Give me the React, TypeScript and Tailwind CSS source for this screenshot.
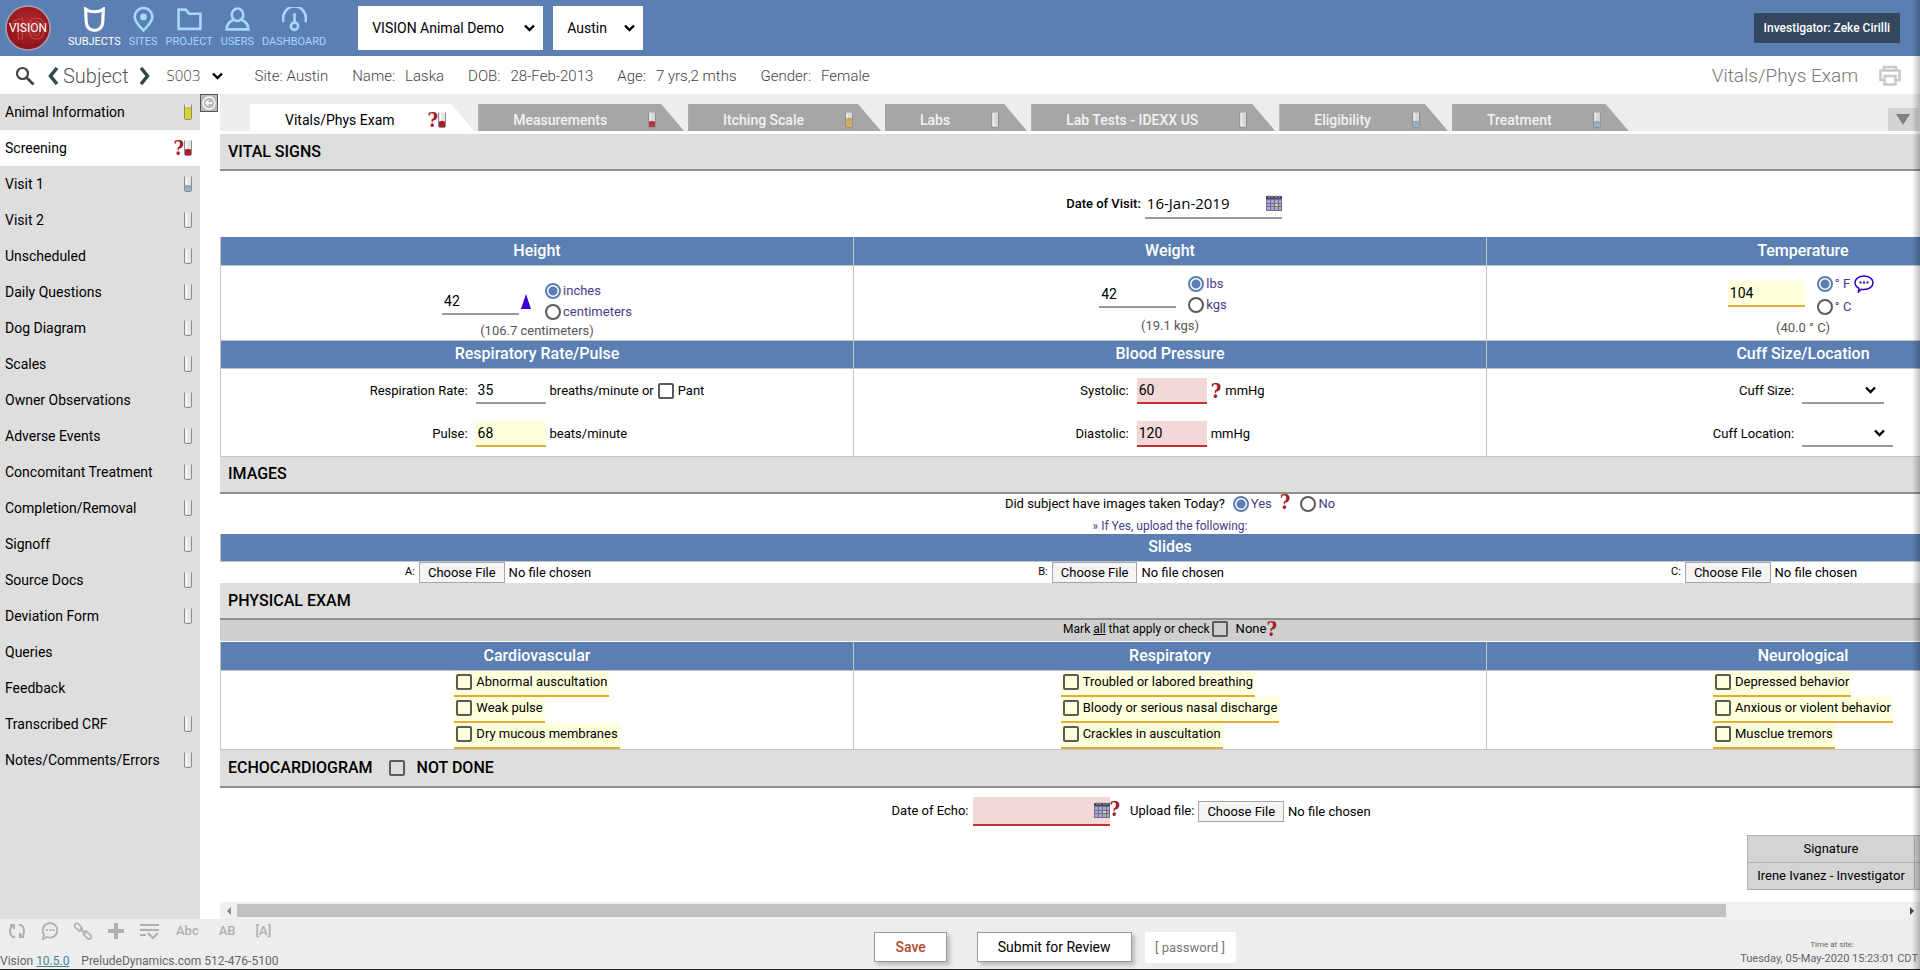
import type { ReactNode } from "react";
import { useState } from "react";

type Fill = "none" | "yellow" | "red" | "blue" | "amber";

const fillColors: Record<Fill, { color: string; height: number }> = {
  none: { color: "#e9e9e9", height: 0 },
  yellow: { color: "#dcd32b", height: 11 },
  red: { color: "#b3202c", height: 5 },
  blue: { color: "#8fb4d6", height: 5 },
  amber: { color: "#dfb04a", height: 8 },
};

const sidebarItems: { label: string; fill?: Fill; query?: boolean }[] = [
  { label: "Animal Information", fill: "yellow" },
  { label: "Screening", fill: "red", query: true },
  { label: "Visit 1", fill: "blue" },
  { label: "Visit 2", fill: "none" },
  { label: "Unscheduled", fill: "none" },
  { label: "Daily Questions", fill: "none" },
  { label: "Dog Diagram", fill: "none" },
  { label: "Scales", fill: "none" },
  { label: "Owner Observations", fill: "none" },
  { label: "Adverse Events", fill: "none" },
  { label: "Concomitant Treatment", fill: "none" },
  { label: "Completion/Removal", fill: "none" },
  { label: "Signoff", fill: "none" },
  { label: "Source Docs", fill: "none" },
  { label: "Deviation Form", fill: "none" },
  { label: "Queries" },
  { label: "Feedback" },
  { label: "Transcribed CRF", fill: "none" },
  { label: "Notes/Comments/Errors", fill: "none" },
];

const tabs: { label: string; fill: Fill; query?: boolean }[] = [
  { label: "Vitals/Phys Exam", fill: "red", query: true },
  { label: "Measurements", fill: "red" },
  { label: "Itching Scale", fill: "amber" },
  { label: "Labs", fill: "none" },
  { label: "Lab Tests - IDEXX US", fill: "none" },
  { label: "Eligibility", fill: "blue" },
  { label: "Treatment", fill: "blue" },
];

const subjectFacts = [
  ["Site:", "Austin"],
  ["Name:", "Laska"],
  ["DOB:", "28-Feb-2013"],
  ["Age:", "7 yrs,2 mths"],
  ["Gender:", "Female"],
];

const findings = [
  {
    title: "Cardiovascular",
    items: ["Abnormal auscultation", "Weak pulse", "Dry mucous membranes"],
  },
  {
    title: "Respiratory",
    items: [
      "Troubled or labored breathing",
      "Bloody or serious nasal discharge",
      "Crackles in auscultation",
    ],
  },
  {
    title: "Neurological",
    items: ["Depressed behavior", "Anxious or violent behavior", "Musclue tremors"],
  },
];

function Tube({ fill }: { fill: Fill }) {
  const { color, height } = fillColors[fill];
  return (
    <svg width="8" height="16" viewBox="0 0 8 16" className="shrink-0" aria-hidden="true">
      <path d="M.5 .5v13.5q0 1.5 1.5 1.5h4q1.5 0 1.5-1.5v-13.5" fill="#e4e4e4" stroke="#8c8c8c" />
      <path d="M2.5 1.5v13" stroke="#fff" strokeWidth="1.5" />
      {height > 0 ? (
        <>
          <rect x="1" y={15 - height} width="6" height={height} fill={color} />
          <ellipse cx="4" cy={15 - height} rx="3" ry="1" fill={color} stroke="#0003" strokeWidth=".5" />
        </>
      ) : null}
    </svg>
  );
}

function Query() {
  return (
    <span className="inline-block shrink-0 font-['DejaVu_Serif_Condensed','DejaVu_Serif',serif] text-[20px] leading-4 font-bold text-[#a51c28]">
      ?
    </span>
  );
}

function Chevron({ className }: { className?: string }) {
  return (
    <svg
      width="11"
      height="8"
      viewBox="0 0 11 8"
      fill="none"
      stroke="#000"
      strokeWidth="2.4"
      className={className}
      aria-hidden="true"
    >
      <path d="M1 1.5l4.5 4.5L10 1.5" />
    </svg>
  );
}

function Calendar() {
  return (
    <svg width="16" height="16" viewBox="0 0 16 16" className="shrink-0" aria-hidden="true">
      <rect x="0" y="1" width="16" height="15" fill="#6d6d9a" />
      <rect x="0" y="1" width="16" height="3" fill="#4a4a5e" />
      <path d="M3 0v3M6 0v3M10 0v3M13 0v3" stroke="#aaa" />
      <path
        d="M1 5h3v3H1zM5 5h3v3H5zM9 5h3v3H9zM13 5h2v3h-2zM1 9h3v2H1zM5 9h3v2H5zM13 9h2v2h-2zM1 12h3v3H1zM5 12h3v3H5zM9 12h3v3H9zM13 12h2v3h-2z"
        fill="#a9a9cc"
      />
      <rect x="9" y="9" width="3" height="2" fill="#f1dc3c" />
    </svg>
  );
}

function Radio({
  name,
  label,
  defaultChecked,
}: {
  name: string;
  label: string;
  defaultChecked?: boolean;
}) {
  return (
    <label className="flex h-[21px] items-center gap-0.5 text-[#473c86]">
      <input
        type="radio"
        name={name}
        defaultChecked={defaultChecked}
        className="size-4 appearance-none rounded-full border-2 border-[#5a5a5a] bg-white checked:border-[#5b7fb2] checked:bg-[radial-gradient(circle,#5b7fb2_4px,#fff_5px)]"
      />
      {label}
    </label>
  );
}

const checkboxClass =
  "size-4 shrink-0 appearance-none rounded-xs border-2 border-[#5a5a5a] checked:bg-[#5b7fb2]";

const inputTones = {
  plain: "border-[#999]",
  warn: "border-[#dfae3a] bg-[#feffdb]",
  error: "border-[#c62f2f] bg-[#f3d8d8]",
};

function ValueInput({
  label,
  id,
  value,
  tone = "plain",
  wide,
}: {
  label?: string;
  id: string;
  value: string;
  tone?: keyof typeof inputTones;
  wide?: boolean;
}) {
  return (
    <input
      id={id}
      aria-label={label}
      defaultValue={value}
      className={`h-[26px] border-b-2 px-0.5 text-sm text-black outline-none ${wide ? "w-[77px]" : "w-[70px]"} ${inputTones[tone]}`}
    />
  );
}

function LineSelect({ id, className }: { id: string; className: string }) {
  return (
    <span className={`relative block ${className}`}>
      <select id={id} className="h-[26px] w-full appearance-none border-b-2 border-[#999] outline-none">
        <option></option>
      </select>
      <Chevron className="pointer-events-none absolute top-2 right-2" />
    </span>
  );
}

function FileField({ id, label, small }: { id: string; label: string; small?: boolean }) {
  return (
    <div className="flex items-center gap-1">
      <label htmlFor={id} className={small ? "text-[11px]" : ""}>
        {label}
      </label>
      <input
        id={id}
        type="file"
        className="h-[21px] w-[250px] text-[13px] leading-[19px] file:mr-1 file:border file:border-[#a6a6a6] file:bg-[#f4f4f4] file:px-2 file:text-[13px] file:leading-[19px] file:font-normal"
      />
    </div>
  );
}

function SectionTitle({ children }: { children: ReactNode }) {
  return (
    <div className="flex h-[37px] items-center border-b-2 border-[#909090] bg-[#dedede] px-2">
      <h2 className="text-base font-medium">{children}</h2>
    </div>
  );
}

const thClass = "h-7 border border-t-0 border-[#c4c4c4] bg-[#5b7fb2] text-base font-medium text-white";
const tdClass = "border border-[#c4c4c4] p-0 align-top";

function Header() {
  const nav: { label: string; icon: ReactNode }[] = [
    {
      label: "SUBJECTS",
      icon: <path d="M3.500 2q3 2.500 8.500 2.500t8.500-2.500l-.5 12q-.5 8-8 8.500-7.500-.5-8-8.500z" strokeWidth="3" />,
    },
    {
      label: "SITES",
      icon: (
        <>
          <path d="M12 22.500q-8.500-8.500-8.500-13a8.500 8.500 0 0 1 17 0q0 4.500-8.500 13z" />
          <circle cx="12" cy="9.500" r="2" fill="currentColor" />
        </>
      ),
    },
    { label: "PROJECT", icon: <path d="M1.500 21V2.500h7l3 4h11V21z" /> },
    {
      label: "USERS",
      icon: (
        <>
          <ellipse cx="12" cy="7.500" rx="5.500" ry="6" />
          <path d="M8 12.500q-6 2-6.500 9h21q-.5-7-6.500-9" />
        </>
      ),
    },
    {
      label: "DASHBOARD",
      icon: (
        <>
          <path d="M1.500 14.500a11 11.500 0 1 1 21 0" />
          <path d="M12 6v9" />
          <circle cx="12" cy="18.500" r="3.500" />
        </>
      ),
    },
  ];

  return (
    <header className="flex h-14 shrink-0 items-center bg-[#5b7fb2] pr-5 pl-[5px]">
      <svg width="46" height="46" viewBox="0 0 46 46" role="img" aria-label="Vision 10">
        <defs>
          <radialGradient id="logo" cx=".5" cy=".4" r=".6">
            <stop offset="0" stopColor="#b52a2c" />
            <stop offset="1" stopColor="#8c1219" />
          </radialGradient>
        </defs>
        <circle cx="23" cy="23" r="22" fill="url(#logo)" stroke="#a9a0b4" strokeWidth="1.500" />
        <text x="23" y="34" textAnchor="middle" fontFamily="Roboto" fontWeight="700" fontSize="30" fill="none" stroke="#c9605f" strokeWidth=".7">
          10
        </text>
        <text x="23" y="27" textAnchor="middle" fontFamily="Roboto" fontSize="12" fill="#fff">
          VISION
        </text>
      </svg>
      <nav className="ml-[17px] flex gap-2">
        {nav.map((item, index) => (
          <a
            key={item.label}
            href="#"
            className={`flex flex-col items-center text-[11px] leading-4 ${index === 0 ? "text-white" : "text-[#a5d8fb]"}`}
          >
            <svg width="25" height="25" viewBox="0 0 24 24" fill="none" stroke="currentColor" strokeWidth="2.500" aria-hidden="true">
              {item.icon}
            </svg>
            <span className="mt-0.5">{item.label}</span>
          </a>
        ))}
      </nav>
      <div className="ml-8 flex gap-2.5 text-sm">
        <div className="relative">
          <select aria-label="Study" className="h-11 w-[185px] appearance-none bg-white pl-3.5">
            <option>VISION Animal Demo</option>
          </select>
          <Chevron className="pointer-events-none absolute top-[18px] right-2" />
        </div>
        <div className="relative">
          <select aria-label="Site" className="h-11 w-[90px] appearance-none bg-white pl-3.5">
            <option>Austin</option>
          </select>
          <Chevron className="pointer-events-none absolute top-[18px] right-2" />
        </div>
      </div>
      <button type="button" className="ml-auto h-[30px] bg-[#33475f] px-2.5 text-xs font-medium text-white">
        Investigator: Zeke Cirilli
      </button>
    </header>
  );
}

function SubjectBar() {
  return (
    <div className="flex h-[38px] shrink-0 items-center bg-white pt-0.5 pr-[18px] pl-[15px] text-[15px] font-light text-[#444]">
      <button type="button" aria-label="Search">
        <svg width="20" height="20" viewBox="0 0 20 20" fill="none" stroke="#444" aria-hidden="true">
          <circle cx="7.500" cy="7.500" r="5.500" strokeWidth="2.200" />
          <path d="M12 12l6.500 6.500" strokeWidth="2.800" />
        </svg>
      </button>
      <button type="button" aria-label="Previous subject" className="ml-3">
        <svg width="12" height="18" viewBox="0 0 12 18" fill="none" stroke="#2f4a4d" strokeWidth="3.500" aria-hidden="true">
          <path d="M10 1L3.500 9l6.500 8" />
        </svg>
      </button>
      <span className="mx-1 text-xl text-[#555]">Subject</span>
      <button type="button" aria-label="Next subject" className="ml-1.5">
        <svg width="12" height="18" viewBox="0 0 12 18" fill="none" stroke="#2f4a4d" strokeWidth="3.500" aria-hidden="true">
          <path d="M2 1l6.500 8L2 17" />
        </svg>
      </button>
      <div className="relative ml-4">
        <select aria-label="Subject number" className="w-[60px] appearance-none font-['Open_Sans',sans-serif] text-[15px]">
          <option>S003</option>
        </select>
        <Chevron className="pointer-events-none absolute top-2 right-1" />
      </div>
      <dl className="ml-7 flex gap-6">
        {subjectFacts.map(([term, value], index) => (
          <div key={term} className={`flex ${index === 0 ? "gap-1" : "gap-2.5"}`}>
            <dt>{term}</dt>
            <dd>{value}</dd>
          </div>
        ))}
      </dl>
      <h1 className="ml-auto text-[19px] text-[#777]">Vitals/Phys Exam</h1>
      <button type="button" aria-label="Print" className="ml-5">
        <svg width="24" height="22" viewBox="0 0 24 22" fill="none" stroke="#c9c9c9" strokeWidth="2.500" aria-hidden="true">
          <path d="M6 5V2h12v3M6 15H2.500V5.500h19V15H18M6.500 11h11v8.500h-11z" />
        </svg>
      </button>
    </div>
  );
}

function Sidebar() {
  return (
    <nav className="w-[200px] shrink-0 bg-[#dedede]">
      {sidebarItems.map((item) => (
        <a
          key={item.label}
          href="#"
          className={`flex h-9 items-center pr-2 pl-[5px] text-sm ${item.query ? "bg-white" : ""}`}
        >
          <span className="grow">{item.label}</span>
          {item.query ? <Query /> : null}
          {item.fill ? <Tube fill={item.fill} /> : null}
        </a>
      ))}
    </nav>
  );
}

function TabBar() {
  return (
    <div className="flex h-[37px] shrink-0 items-end bg-[#ededed] pr-0.5 pl-[30px]">
      <div role="tablist" className="flex gap-1">
        {tabs.map((tab, index) => (
          <button
            key={tab.label}
            type="button"
            role="tab"
            aria-selected={index === 0}
            className={`flex h-[27px] items-center pr-7 pl-[35px] text-sm [clip-path:polygon(0_0,calc(100%-23px)_0,100%_100%,0_100%)] ${
              index === 0 ? "bg-white text-black" : "bg-[#a6a6a6] font-medium text-[#f2f2f2]"
            }`}
          >
            <span className={`pt-1 ${index === 0 ? "mr-[33px]" : "mr-[41px]"}`}>{tab.label}</span>
            <span className={`flex items-center pt-1 ${index === 0 ? "" : "opacity-80"}`}>
              {tab.query ? <Query /> : null}
              <Tube fill={tab.fill} />
            </span>
          </button>
        ))}
      </div>
      <button type="button" aria-label="More tabs" className="ml-auto flex h-[23px] w-[30px] items-center justify-center bg-[#d3d3d3]">
        <svg width="14" height="11" viewBox="0 0 14 11" aria-hidden="true">
          <path d="M0 0h14L7 11z" fill="#808080" />
        </svg>
      </button>
    </div>
  );
}

const pairGridClass =
  "grid grid-cols-[auto_auto] items-center justify-center gap-x-2 gap-y-[17px] pt-[9px] text-[13px]";

function VitalsTable() {
  return (
    <table className="w-full table-fixed border-collapse">
      <tbody>
        <tr>
          <th className={thClass}>Height</th>
          <th className={thClass}>Weight</th>
          <th className={thClass}>Temperature</th>
        </tr>
        <tr className="h-[75px]">
          <td className={tdClass}>
            <div className="flex flex-col items-center pt-[15px] text-[13px] leading-4">
              <div className="flex items-center">
                <ValueInput id="height" label="Height" value="42" wide />
                <svg width="10" height="15" viewBox="0 0 10 15" className="mr-3.5 ml-0.5" aria-hidden="true">
                  <path d="M5 0l5 15H0z" fill="#3a00d8" />
                </svg>
                <div>
                  <Radio name="heightUnit" label="inches" defaultChecked />
                  <Radio name="heightUnit" label="centimeters" />
                </div>
              </div>
              <span className="text-[#555]">(106.7 centimeters)</span>
            </div>
          </td>
          <td className={tdClass}>
            <div className="flex flex-col items-center pt-2 text-[13px] leading-5">
              <div className="flex items-center gap-3 pr-3.5">
                <ValueInput id="weight" label="Weight" value="42" wide />
                <div>
                  <Radio name="weightUnit" label="lbs" defaultChecked />
                  <Radio name="weightUnit" label="kgs" />
                </div>
              </div>
              <span className="text-[#555]">(19.1 kgs)</span>
            </div>
          </td>
          <td className={tdClass}>
            <div className="flex flex-col items-center pt-[5px] text-[13px] leading-5">
              <div className="flex items-center gap-3 pr-1">
                <ValueInput id="temperature" label="Temperature" value="104" tone="warn" wide />
                <div>
                  <div className="flex h-[26px] items-center gap-1">
                    <Radio name="tempUnit" label="° F" defaultChecked />
                    <button type="button" aria-label="Comment">
                      <svg width="20" height="18" viewBox="0 0 20 18" aria-hidden="true">
                        <path
                          d="M10 1c5 0 9 2.900 9 6.800s-4 6.800-9 6.800q-1.500 0-2.800-.3L4.500 17l.5-3.700C2.500 12 1 10.200 1 7.800 1 3.900 5 1 10 1z"
                          fill="none"
                          stroke="#3500c8"
                          strokeWidth="1.500"
                        />
                        <path d="M5.500 7.500h2M9 7.500h2M12.500 7.500h2" stroke="#3500c8" strokeWidth="2" />
                      </svg>
                    </button>
                  </div>
                  <Radio name="tempUnit" label="° C" />
                </div>
              </div>
              <span className="text-[#555]">(40.0 ° C)</span>
            </div>
          </td>
        </tr>
        <tr>
          <th className={thClass}>Respiratory Rate/Pulse</th>
          <th className={thClass}>Blood Pressure</th>
          <th className={thClass}>Cuff Size/Location</th>
        </tr>
        <tr className="h-[88px]">
          <td className={tdClass}>
            <div className={pairGridClass}>
              <label htmlFor="respiration" className="text-right">
                Respiration Rate:
              </label>
              <div className="flex items-center gap-1">
                <ValueInput id="respiration" value="35" />
                breaths/minute or
                <label className="flex items-center gap-1">
                  <input type="checkbox" className={checkboxClass} />
                  Pant
                </label>
              </div>
              <label htmlFor="pulse" className="text-right">
                Pulse:
              </label>
              <div className="flex items-center gap-1">
                <ValueInput id="pulse" value="68" tone="warn" />
                beats/minute
              </div>
            </div>
          </td>
          <td className={tdClass}>
            <div className={pairGridClass}>
              <label htmlFor="systolic" className="text-right">
                Systolic:
              </label>
              <div className="flex items-center gap-1">
                <ValueInput id="systolic" value="60" tone="error" />
                <Query />
                mmHg
              </div>
              <label htmlFor="diastolic" className="text-right">
                Diastolic:
              </label>
              <div className="flex items-center gap-1">
                <ValueInput id="diastolic" value="120" tone="error" />
                mmHg
              </div>
            </div>
          </td>
          <td className={tdClass}>
            <div className={pairGridClass}>
              <label htmlFor="cuffSize" className="text-right">
                Cuff Size:
              </label>
              <LineSelect id="cuffSize" className="w-[82px]" />
              <label htmlFor="cuffLocation" className="text-right">
                Cuff Location:
              </label>
              <LineSelect id="cuffLocation" className="w-[91px]" />
            </div>
          </td>
        </tr>
      </tbody>
    </table>
  );
}

function FindingsTable() {
  return (
    <table className="w-full table-fixed border-collapse">
      <thead>
        <tr>
          {findings.map((group) => (
            <th key={group.title} className={thClass}>
              {group.title}
            </th>
          ))}
        </tr>
      </thead>
      <tbody>
        <tr>
          {findings.map((group) => (
            <td key={group.title} className={tdClass}>
              <div className="flex justify-center">
                <div className="flex flex-col items-start">
                  {group.items.map((item) => (
                    <label
                      key={item}
                      className="flex h-[26px] items-center gap-1 border-b-2 border-[#dfae3a] bg-[#feffdb] px-0.5 pb-0.5 text-[13px]"
                    >
                      <input type="checkbox" className={checkboxClass} />
                      {item}
                    </label>
                  ))}
                </div>
              </div>
            </td>
          ))}
        </tr>
      </tbody>
    </table>
  );
}

function ExamForm() {
  return (
    <form className="min-w-[1900px] text-[13px]">
      <SectionTitle>VITAL SIGNS</SectionTitle>
      <div className="flex h-[66px] items-center justify-center gap-1 pl-2">
        <label htmlFor="visitDate" className="font-medium">
          Date of Visit:
        </label>
        <div className="flex h-[30px] w-[137px] items-center border-b-2 border-[#999]">
          <input
            id="visitDate"
            defaultValue="16-Jan-2019"
            className="w-full px-0.5 font-['Open_Sans',sans-serif] text-[15px] outline-none"
          />
          <Calendar />
        </div>
      </div>
      <VitalsTable />

      <SectionTitle>IMAGES</SectionTitle>
      <fieldset className="flex h-10 flex-col items-center justify-between">
        <div className="flex items-center">
          <span className="mr-2">Did subject have images taken Today?</span>
          <Radio name="images" label="Yes" defaultChecked />
          <span className="mr-2.5 ml-2">
            <Query />
          </span>
          <Radio name="images" label="No" />
        </div>
        <div className="text-xs leading-4 text-[#473c86]">» If Yes, upload the following:</div>
      </fieldset>
      <table className="w-full table-fixed border-collapse">
        <thead>
          <tr>
            <th colSpan={3} className={thClass}>
              Slides
            </th>
          </tr>
        </thead>
        <tbody>
          <tr>
            {["A", "B", "C"].map((slot) => (
              <td key={slot} className="p-0">
                <div className="flex justify-center">
                  <FileField id={`slide${slot}`} label={`${slot}:`} small />
                </div>
              </td>
            ))}
          </tr>
        </tbody>
      </table>

      <SectionTitle>PHYSICAL EXAM</SectionTitle>
      <div className="mb-px flex h-[21px] items-center justify-center bg-[#cfcfcf] pb-[3px]">
        <span className="mr-0.5 text-xs">
          Mark <u>all</u> that apply or check
        </span>
        <label className="flex items-center gap-2">
          <input type="checkbox" className={checkboxClass} />
          None
        </label>
        <Query />
      </div>
      <FindingsTable />

      <div className="flex h-[38px] items-center border-b-2 border-[#909090] bg-[#dedede] px-2 text-base font-medium">
        <h2>ECHOCARDIOGRAM</h2>
        <label className="ml-4 flex items-center gap-3">
          <input type="checkbox" className={checkboxClass} />
          NOT DONE
        </label>
      </div>
      <div className="flex items-start justify-center pt-[9px]">
        <div className="flex items-center gap-1">
          <label htmlFor="echoDate">Date of Echo:</label>
          <div className="flex h-[29px] w-[137px] items-center border-b-2 border-[#c62f2f] bg-[#f3d8d8]">
            <input id="echoDate" className="w-full px-0.5 text-[15px] outline-none" />
            <Calendar />
          </div>
        </div>
        <span className="mt-1 mr-2.5">
          <Query />
        </span>
        <div className="mt-1">
          <FileField id="echoFile" label="Upload file:" />
        </div>
      </div>

      <table className="mt-[9px] ml-auto w-[373px] border-collapse bg-[#d4d4d4]">
        <tbody>
          <tr className="h-[27px]">
            <td className="w-[167px] border border-[#b0b0b0] text-center">Signature</td>
            <td className="border border-[#b0b0b0]"></td>
          </tr>
          <tr className="h-[27px]">
            <td className="border border-[#b0b0b0] text-center whitespace-nowrap">Irene Ivanez - Investigator</td>
            <td className="border border-[#b0b0b0]"></td>
          </tr>
        </tbody>
      </table>
    </form>
  );
}

function ScrollBar() {
  return (
    <div className="flex h-[17px] shrink-0 items-center bg-[#f0f0f0]">
      <button type="button" aria-label="Scroll left" className="flex w-[17px] justify-center">
        <svg width="4" height="8" viewBox="0 0 4 8" aria-hidden="true">
          <path d="M4 0v8L0 4z" fill="#888" />
        </svg>
      </button>
      <div className="grow pr-[177px]">
        <div className="h-[13px] bg-[#c1c1c1]" />
      </div>
      <button type="button" aria-label="Scroll right" className="flex w-[17px] justify-center">
        <svg width="4" height="8" viewBox="0 0 4 8" aria-hidden="true">
          <path d="M0 0v8l4-4z" fill="#444" />
        </svg>
      </button>
    </div>
  );
}

function Footer() {
  return (
    <footer className="flex h-[51px] shrink-0 justify-between border-b border-[#222] bg-[#ededed] text-xs text-[#666]">
      <div className="flex flex-1 flex-col justify-between">
        <div className="flex h-6 items-center gap-[15px] pl-2 text-[13px] font-medium text-[#b0b0b0]">
          <button type="button" aria-label="Refresh">
            <svg width="18" height="16" viewBox="0 0 18 16" fill="none" stroke="currentColor" strokeWidth="2" aria-hidden="true">
              <path d="M7 14H5q-3-2-3-6t3-5.500M2 2h4v4M11 2h2q3 2 3 6t-3 5.500M16 14h-4v-4" />
            </svg>
          </button>
          <button type="button" aria-label="Comments">
            <svg width="18" height="18" viewBox="0 0 18 18" fill="none" stroke="currentColor" strokeWidth="1.800" aria-hidden="true">
              <path d="M2 17l1-4.500A7.300 7.300 0 1 1 6 15z" />
              <path d="M5 8h2M8.200 8h2M11.400 8h2" />
            </svg>
          </button>
          <button type="button" aria-label="Link">
            <svg width="18" height="18" viewBox="0 0 18 18" fill="none" stroke="currentColor" strokeWidth="1.600" aria-hidden="true">
              <rect x="0" y="3" width="9" height="4.500" rx="2.200" transform="rotate(45 4.500 5)" />
              <rect x="9" y="11" width="9" height="4.500" rx="2.200" transform="rotate(45 13.500 13)" />
              <path d="M6 6l6 6" />
            </svg>
          </button>
          <button type="button" aria-label="Add">
            <svg width="18" height="18" viewBox="0 0 18 18" stroke="currentColor" strokeWidth="4" aria-hidden="true">
              <path d="M9 1v16M1 9h16" />
            </svg>
          </button>
          <button type="button" aria-label="Collapse list">
            <svg width="19" height="18" viewBox="0 0 19 18" fill="none" stroke="currentColor" strokeWidth="2" aria-hidden="true">
              <path d="M0 3h19M0 8h19M0 13h6M8 11l5 5 5-5" />
            </svg>
          </button>
          <div className="flex gap-5 pl-0.5">
            <button type="button">Abc</button>
            <button type="button">AB</button>
            <button type="button">[A]</button>
          </div>
        </div>
        <p className="whitespace-pre">
          Vision <a href="#" className="text-[#3f8a94] underline">10.5.0</a>
          {"    "}PreludeDynamics.com 512-476-5100
        </p>
      </div>
      <div className="ml-[196px] flex items-center pt-1.5 pr-1 text-sm">
        <button type="button" className="h-[30px] border border-[#999] bg-white px-5 font-medium text-[#b04a30] shadow-[3px_3px_4px_#bbb]">
          Save
        </button>
        <button type="button" className="ml-[30px] h-[30px] border border-[#999] bg-white px-5 text-black shadow-[3px_3px_4px_#bbb]">
          Submit for Review
        </button>
        <input
          type="password"
          aria-label="Password"
          placeholder="[ password ]"
          className="ml-[13px] h-[31px] w-[91px] rounded-xs bg-white text-center text-[13px] outline-none placeholder:text-[#777]"
        />
      </div>
      <div className="flex flex-1 flex-col items-end justify-end pr-0.5 pb-0.5 text-[11px] leading-4">
        <span className="mr-16 text-[8px] leading-3">Time at site:</span>
        <span>Tuesday, 05-May-2020 15:23:01 CDT</span>
      </div>
    </footer>
  );
}

export default function App() {
  const [sidebarOpen, setSidebarOpen] = useState(true);

  return (
    <div className="relative flex h-screen flex-col overflow-hidden bg-white font-[Roboto,sans-serif] text-black">
      <Header />
      <SubjectBar />
      <div className="flex min-h-0 flex-1">
        {sidebarOpen ? <Sidebar /> : null}
        <div className="w-5 shrink-0">
          <button
            type="button"
            aria-label="Toggle menu"
            onClick={() => setSidebarOpen(!sidebarOpen)}
            className="flex size-[18px] items-center justify-center border border-[#555] bg-[#b9b9b9]"
          >
            <svg width="14" height="14" viewBox="0 0 14 14" fill="none" stroke="#fff" strokeWidth="1.300" className="shrink-0" aria-hidden="true">
              <circle cx="7" cy="7" r="6" />
              <path d="M10.500 7H4M6.500 4.200L3.800 7l2.700 2.800" />
            </svg>
          </button>
        </div>
        <main className="flex min-w-0 flex-1 flex-col">
          <TabBar />
          <div className="mt-[3px] min-h-0 flex-1 overflow-hidden">
            <ExamForm />
          </div>
          <ScrollBar />
        </main>
      </div>
      <Footer />
      <div className="pointer-events-none absolute inset-y-0 right-0 w-2 bg-linear-to-l from-black/25 to-transparent" />
    </div>
  );
}
